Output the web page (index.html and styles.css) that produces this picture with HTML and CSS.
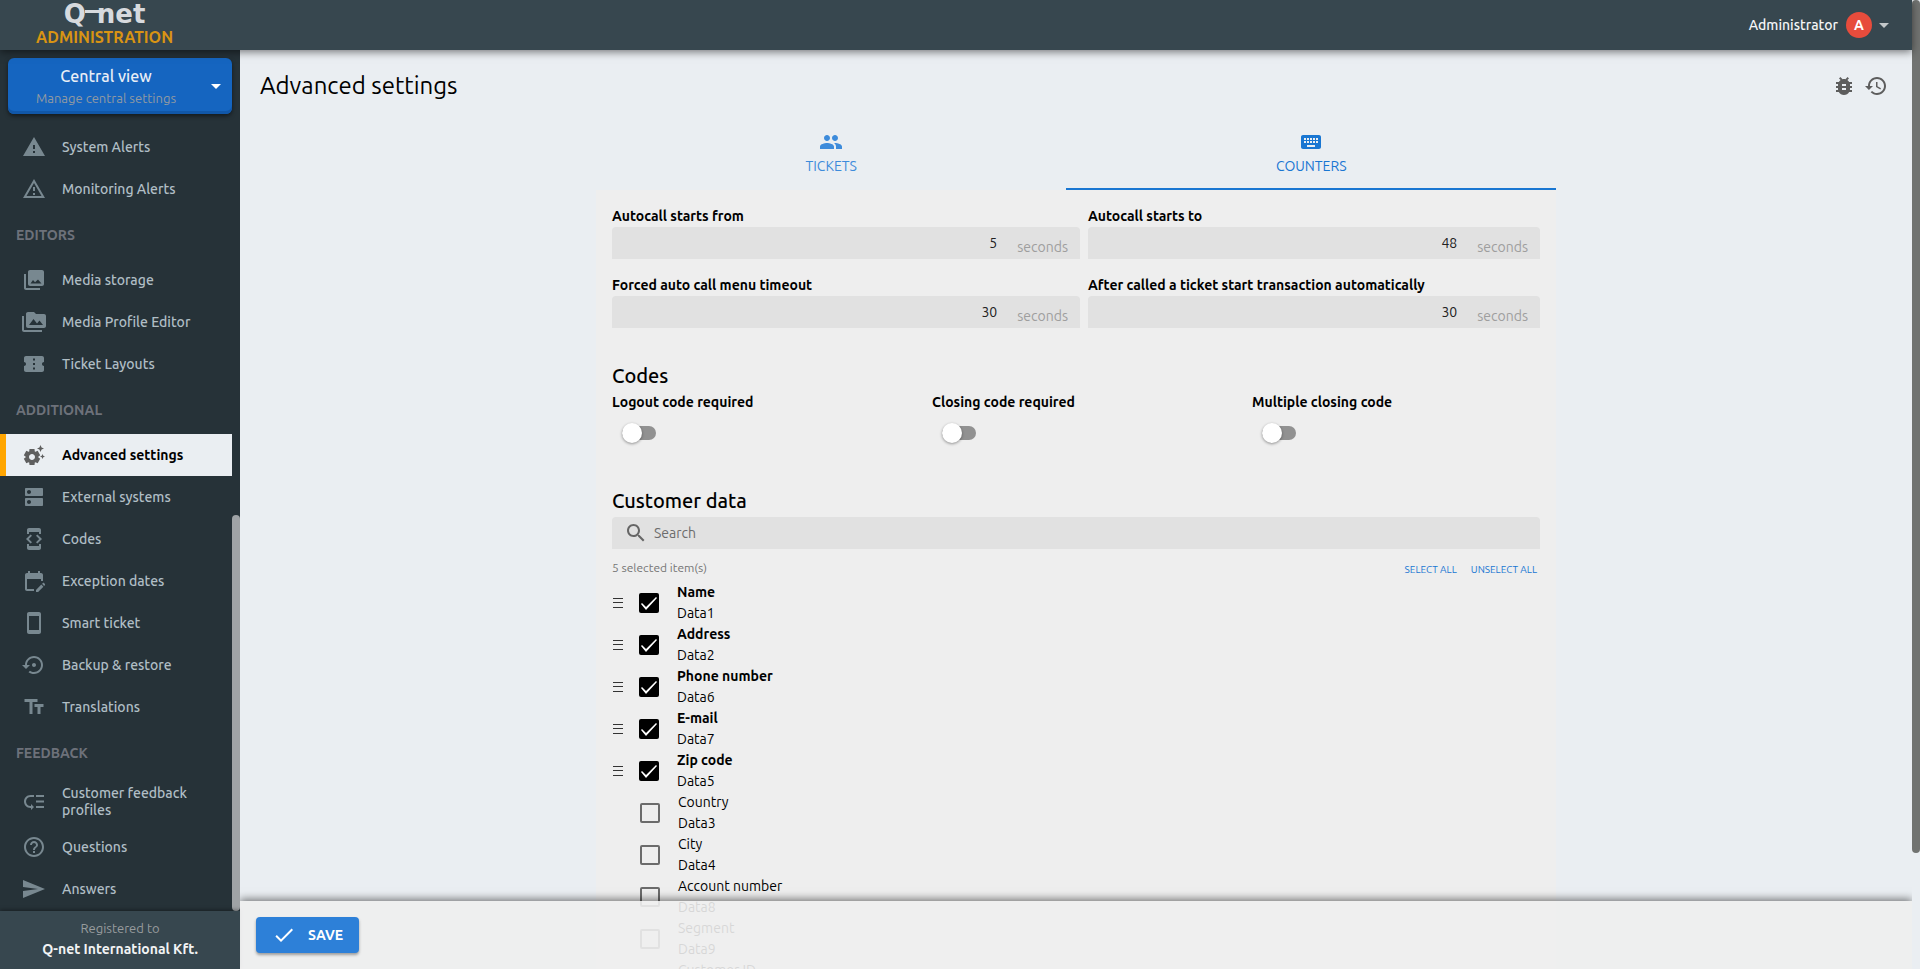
FILE: index.html
```html
<!DOCTYPE html>
<html lang="en">
<head>
<meta charset="utf-8">
<title>Advanced settings</title>
<link rel="stylesheet" href="styles.css">
</head>
<body>
<svg class="sprite" aria-hidden="true">
  <symbol id="i-warning" viewBox="0 0 24 24"><path d="M1 21h22L12 2 1 21zm12-3h-2v-2h2v2zm0-4h-2v-4h2v4z"/></symbol>
  <symbol id="i-warning-o" viewBox="0 0 24 24"><path d="M12 5.99L19.53 19H4.47L12 5.99M12 2L1 21h22L12 2zm1 14h-2v2h2v-2zm0-6h-2v4h2v-4z"/></symbol>
  <symbol id="i-photos" viewBox="0 0 24 24"><path d="M22 16V4c0-1.1-.9-2-2-2H8c-1.1 0-2 .9-2 2v12c0 1.1.9 2 2 2h12c1.1 0 2-.9 2-2zM8.500 15.500l2.500-3.500 2.030 2.200L16 11.500l3.500 4H8.500zM2 6v14c0 1.1.9 2 2 2h14v-2H4V6H2z"/></symbol>
  <symbol id="i-media" viewBox="0 0 24 24"><path d="M2 6H0v5h.01L0 20c0 1.1.9 2 2 2h18v-2H2V6zm20-2h-8l-2-2H6c-1.100 0-1.990.9-1.990 2L4 16c0 1.1.9 2 2 2h16c1.1 0 2-.9 2-2V6c0-1.100-.9-2-2-2zM7 15l4.500-6 3.500 4.510 2.500-3.010L21 15H7z"/></symbol>
  <symbol id="i-ticket" viewBox="0 0 24 24"><path d="M22 10V6c0-1.110-.9-2-2-2H4c-1.100 0-1.990.89-1.990 2v4c1.100 0 1.990.9 1.990 2s-.89 2-2 2v4c0 1.100.9 2 2 2h16c1.100 0 2-.9 2-2v-4c-1.100 0-2-.9-2-2s.9-2 2-2zm-9 7.500h-2v-2h2v2zm0-4.500h-2v-2h2v2zm0-4.500h-2v-2h2v2z"/></symbol>
  <symbol id="i-suggest" viewBox="0 0 24 24"><path d="M17.41 6.59L15 5.5l2.41-1.09L18.5 2l1.09 2.410L22 5.500l-2.410 1.090L18.500 9l-1.090-2.410zM21.280 12.720L20.500 11l-.78 1.720L18 13.500l1.720.78L20.500 16l.78-1.720L23 13.500l-1.720-.78zM16.240 14.370l1.940 1.470-2.500 4.330-2.240-.94c-.2.13-.42.26-.64.37l-.3 2.400h-5l-.3-2.410c-.22-.11-.43-.23-.64-.37l-2.240.94-2.500-4.330 1.940-1.470c-.01-.11-.01-.24-.01-.36s0-.25.01-.37l-1.940-1.470 2.500-4.330 2.240.94c.2-.13.42-.26.64-.37L7.500 6h5l.3 2.410c.22.11.43.23.64.37l2.240-.94 2.500 4.330-1.940 1.470c.01.12.01.24.01.37s0 .24-.01.36zM13 14c0-1.660-1.340-3-3-3s-3 1.340-3 3 1.340 3 3 3 3-1.340 3-3z"/></symbol>
  <symbol id="i-dns" viewBox="0 0 24 24"><path d="M20 13H4c-.55 0-1 .45-1 1v6c0 .55.45 1 1 1h16c.55 0 1-.45 1-1v-6c0-.55-.45-1-1-1zM7 19c-1.100 0-2-.9-2-2s.9-2 2-2 2 .9 2 2-.9 2-2 2zM20 3H4c-.55 0-1 .45-1 1v6c0 .55.45 1 1 1h16c.55 0 1-.45 1-1V4c0-.55-.45-1-1-1zM7 9c-1.100 0-2-.9-2-2s.9-2 2-2 2 .9 2 2-.9 2-2 2z"/></symbol>
  <symbol id="i-code" viewBox="0 0 24 24"><path d="M7 5h10v2h2V3c0-1.100-.9-1.990-2-1.990L7 1c-1.100 0-2 .9-2 2v4h2V5zm8.410 11.590L20 12l-4.590-4.590L14 8.830 17.170 12 14 15.170l1.410 1.420zM10 15.170L6.830 12 10 8.830 8.590 7.410 4 12l4.590 4.590L10 15.170zM17 19H7v-2H5v4c0 1.100.9 2 2 2h10c1.100 0 2-.9 2-2v-4h-2v2z"/></symbol>
  <symbol id="i-calendar" viewBox="0 0 24 24"><path d="M12 22H5c-1.110 0-2-.9-2-2l.01-14c0-1.100.88-2 1.990-2h1V2h2v2h8V2h2v2h1c1.100 0 2 .9 2 2v6h-2v-2H5v10h7v2zm10.130-5.010.71-.71c.39-.39.39-1.020 0-1.410l-.71-.71c-.39-.39-1.020-.39-1.410 0l-.71.71 2.120 2.120zm-.71.71-5.300 5.300H14v-2.120l5.300-5.300 2.120 2.120z"/></symbol>
  <symbol id="i-phone" viewBox="0 0 24 24"><path d="M17 1.010L7 1c-1.100 0-1.990.9-1.990 2v18c0 1.100.89 2 1.990 2h10c1.100 0 2-.9 2-2V3c0-1.100-.9-1.990-2-1.990zM17 19H7V5h10v14z"/></symbol>
  <symbol id="i-backup" viewBox="0 0 24 24"><path d="M14 12c0-1.100-.9-2-2-2s-2 .9-2 2 .9 2 2 2 2-.9 2-2zm-2-9c-4.970 0-9 4.030-9 9H0l4 4 4-4H5c0-3.870 3.130-7 7-7s7 3.130 7 7-3.130 7-7 7c-1.510 0-2.910-.49-4.060-1.300l-1.420 1.440C8.040 20.300 9.940 21 12 21c4.970 0 9-4.030 9-9s-4.030-9-9-9z"/></symbol>
  <symbol id="i-text" viewBox="0 0 24 24"><path d="M2.500 4v3h5v12h3V7h5V4h-13zm19 5h-9v3h3v7h3v-7h3V9z"/></symbol>
  <symbol id="i-priority" viewBox="0 0 24 24"><path d="M14 5h8v2h-8zm0 5.500h8v2h-8zm0 5.500h8v2h-8zM2 11.500C2 15.080 4.920 18 8.500 18H9v2l3-3-3-3v2h-.5C6.020 16 4 13.980 4 11.500S6.020 7 8.500 7H12V5H8.500C4.920 5 2 7.920 2 11.500z"/></symbol>
  <symbol id="i-help" viewBox="0 0 24 24"><path d="M11 18h2v-2h-2v2zm1-16C6.480 2 2 6.480 2 12s4.480 10 10 10 10-4.480 10-10S17.520 2 12 2zm0 18c-4.410 0-8-3.590-8-8s3.590-8 8-8 8 3.590 8 8-3.590 8-8 8zm0-14c-2.210 0-4 1.790-4 4h2c0-1.100.9-2 2-2s2 .9 2 2c0 2-3 1.750-3 5h2c0-2.250 3-2.500 3-5 0-2.210-1.790-4-4-4z"/></symbol>
  <symbol id="i-send" viewBox="0 0 24 24"><path d="M1 21L23 12 1 3v7l15 2-15 2z"/></symbol>
  <symbol id="i-bug" viewBox="0 0 24 24"><path d="M20 8h-2.810c-.45-.78-1.070-1.450-1.820-1.960L17 4.410 15.590 3l-2.170 2.170C12.960 5.060 12.490 5 12 5c-.49 0-.96.06-1.410.17L8.410 3 7 4.410l1.620 1.630C7.880 6.550 7.260 7.220 6.810 8H4v2h2.090c-.05.33-.09.66-.09 1v1H4v2h2v1c0 .34.04.67.09 1H4v2h2.810c1.040 1.790 2.970 3 5.190 3s4.150-1.210 5.190-3H20v-2h-2.090c.05-.33.09-.66.09-1v-1h2v-2h-2v-1c0-.34-.04-.67-.09-1H20V8zm-6 8h-4v-2h4v2zm0-4h-4v-2h4v2z"/></symbol>
  <symbol id="i-history" viewBox="0 0 24 24"><path d="M13 3c-4.970 0-9 4.030-9 9H1l3.890 3.890.07.14L9 12H6c0-3.870 3.130-7 7-7s7 3.130 7 7-3.130 7-7 7c-1.930 0-3.680-.79-4.940-2.060l-1.420 1.420C8.270 19.990 10.510 21 13 21c4.970 0 9-4.030 9-9s-4.030-9-9-9zm-1 5v5l4.280 2.540.72-1.210-3.500-2.080V8H12z"/></symbol>
  <symbol id="i-people" viewBox="0 0 24 24"><path d="M16 11c1.660 0 2.990-1.340 2.990-3S17.660 5 16 5c-1.660 0-3 1.340-3 3s1.340 3 3 3zm-8 0c1.660 0 2.990-1.340 2.990-3S9.660 5 8 5C6.340 5 5 6.340 5 8s1.340 3 3 3zm0 2c-2.330 0-7 1.170-7 3.500V19h14v-2.500c0-2.330-4.670-3.500-7-3.500zm8 0c-.29 0-.62.02-.97.05 1.160.84 1.970 1.970 1.970 3.450V19h6v-2.500c0-2.330-4.670-3.500-7-3.500z"/></symbol>
  <symbol id="i-keyboard" viewBox="0 0 24 24"><path d="M20 5H4c-1.100 0-1.990.9-1.990 2L2 17c0 1.100.9 2 2 2h16c1.100 0 2-.9 2-2V7c0-1.100-.9-2-2-2zm-9 3h2v2h-2V8zm0 3h2v2h-2v-2zM8 8h2v2H8V8zm0 3h2v2H8v-2zm-1 2H5v-2h2v2zm0-3H5V8h2v2zm9 7H8v-2h8v2zm0-4h-2v-2h2v2zm0-3h-2V8h2v2zm3 3h-2v-2h2v2zm0-3h-2V8h2v2z"/></symbol>
  <symbol id="i-check" viewBox="0 0 24 24"><path d="M9 16.170L4.830 12l-1.420 1.410L9 19 21 7l-1.410-1.410z"/></symbol>
  <symbol id="i-drop" viewBox="0 0 24 24"><path d="M7 10l5 5 5-5z"/></symbol>
  <symbol id="i-search" viewBox="0 0 24 24"><path d="M15.500 14h-.79l-.28-.27C15.410 12.590 16 11.110 16 9.500 16 5.910 13.090 3 9.500 3S3 5.910 3 9.500 5.910 16 9.500 16c1.610 0 3.090-.59 4.230-1.570l.27.28v.79l5 4.990L20.490 19l-4.990-5zm-6 0C7.010 14 5 11.990 5 9.500S7.010 5 9.500 5 14 7.010 14 9.500 11.990 14 9.500 14z"/></symbol>
  <symbol id="i-handle" viewBox="0 0 12 12"><path d="M1 1h10v1H1zM1 5h10v1H1zM1 10h10v1H1z"/></symbol>
</svg>
<div class="app">
  <div class="shell">
    <header class="topbar">
      <div class="brand">
        <div class="logo" aria-label="Q-net"><span>Q</span><span class="logo-bar"></span><span>net</span></div>
        <div class="brand-sub">ADMINISTRATION</div>
      </div>
      <button class="user" type="button">
        <span>Administrator</span>
        <span class="avatar">A</span>
        <svg class="icon user-arrow"><use href="#i-drop"/></svg>
      </button>
    </header>
    <div class="body">
      <aside class="sidebar">
        <button class="switcher" type="button">
          <span class="switcher-text"><span class="switcher-title">Central view</span><span class="switcher-sub">Manage central settings</span></span>
          <svg class="icon"><use href="#i-drop"/></svg>
        </button>
        <div class="nav-wrap">
          <nav class="nav">
            <a class="nav-item" href="#"><svg class="icon"><use href="#i-warning"/></svg><span>System Alerts</span></a>
            <a class="nav-item" href="#"><svg class="icon"><use href="#i-warning-o"/></svg><span>Monitoring Alerts</span></a>
            <h2 class="nav-head">EDITORS</h2>
            <a class="nav-item" href="#"><svg class="icon"><use href="#i-photos"/></svg><span>Media storage</span></a>
            <a class="nav-item" href="#"><svg class="icon"><use href="#i-media"/></svg><span>Media Profile Editor</span></a>
            <a class="nav-item" href="#"><svg class="icon"><use href="#i-ticket"/></svg><span>Ticket Layouts</span></a>
            <h2 class="nav-head">ADDITIONAL</h2>
            <a class="nav-item active" href="#"><svg class="icon"><use href="#i-suggest"/></svg><span>Advanced settings</span></a>
            <a class="nav-item" href="#"><svg class="icon"><use href="#i-dns"/></svg><span>External systems</span></a>
            <a class="nav-item" href="#"><svg class="icon"><use href="#i-code"/></svg><span>Codes</span></a>
            <a class="nav-item" href="#"><svg class="icon"><use href="#i-calendar"/></svg><span>Exception dates</span></a>
            <a class="nav-item" href="#"><svg class="icon"><use href="#i-phone"/></svg><span>Smart ticket</span></a>
            <a class="nav-item" href="#"><svg class="icon"><use href="#i-backup"/></svg><span>Backup &amp; restore</span></a>
            <a class="nav-item" href="#"><svg class="icon"><use href="#i-text"/></svg><span>Translations</span></a>
            <h2 class="nav-head">FEEDBACK</h2>
            <a class="nav-item tall" href="#"><svg class="icon"><use href="#i-priority"/></svg><span>Customer feedback profiles</span></a>
            <a class="nav-item" href="#"><svg class="icon"><use href="#i-help"/></svg><span>Questions</span></a>
            <a class="nav-item" href="#"><svg class="icon"><use href="#i-send"/></svg><span>Answers</span></a>
          </nav>
          <div class="nav-scroll"><div class="nav-thumb"></div></div>
        </div>
        <footer class="registered"><span class="reg-label">Registered to</span><span class="reg-name">Q-net International Kft.</span></footer>
      </aside>
      <main class="main">
        <div class="content">
          <div class="title-row">
            <h1>Advanced settings</h1>
            <div class="actions">
              <button type="button" aria-label="Report a bug"><svg class="icon"><use href="#i-bug"/></svg></button>
              <button type="button" aria-label="History"><svg class="icon"><use href="#i-history"/></svg></button>
            </div>
          </div>
          <div class="column">
            <div class="tabs" role="tablist">
              <button class="tab" role="tab" type="button"><svg class="icon"><use href="#i-people"/></svg><span>TICKETS</span></button>
              <button class="tab selected" role="tab" aria-selected="true" type="button"><svg class="icon"><use href="#i-keyboard"/></svg><span>COUNTERS</span></button>
            </div>
            <section class="panel">
              <div class="fields">
                <div><label for="f1">Autocall starts from</label><div class="field"><input id="f1" type="text" value="5"><span>seconds</span></div></div>
                <div><label for="f2">Autocall starts to</label><div class="field"><input id="f2" type="text" value="48"><span>seconds</span></div></div>
                <div><label for="f3">Forced auto call menu timeout</label><div class="field"><input id="f3" type="text" value="30"><span>seconds</span></div></div>
                <div><label for="f4">After called a ticket start transaction automatically</label><div class="field"><input id="f4" type="text" value="30"><span>seconds</span></div></div>
              </div>
              <h3>Codes</h3>
              <div class="codes">
                <div><label for="c1">Logout code required</label><div class="toggle-row"><input id="c1" class="toggle" type="checkbox"></div></div>
                <div><label for="c2">Closing code required</label><div class="toggle-row"><input id="c2" class="toggle" type="checkbox"></div></div>
                <div><label for="c3">Multiple closing code</label><div class="toggle-row"><input id="c3" class="toggle" type="checkbox"></div></div>
              </div>
              <h3>Customer data</h3>
              <div class="search"><svg class="icon"><use href="#i-search"/></svg><input type="text" placeholder="Search" aria-label="Search"></div>
              <div class="summary">
                <span>5 selected item(s)</span>
                <div class="bulk"><button type="button">SELECT ALL</button><button type="button">UNSELECT ALL</button></div>
              </div>
              <ul class="items">
                <li class="on"><svg class="handle"><use href="#i-handle"/></svg><input id="d1" type="checkbox" checked><label for="d1"><b>Name</b><span>Data1</span></label></li>
                <li class="on"><svg class="handle"><use href="#i-handle"/></svg><input id="d2" type="checkbox" checked><label for="d2"><b>Address</b><span>Data2</span></label></li>
                <li class="on"><svg class="handle"><use href="#i-handle"/></svg><input id="d6" type="checkbox" checked><label for="d6"><b>Phone number</b><span>Data6</span></label></li>
                <li class="on"><svg class="handle"><use href="#i-handle"/></svg><input id="d7" type="checkbox" checked><label for="d7"><b>E-mail</b><span>Data7</span></label></li>
                <li class="on"><svg class="handle"><use href="#i-handle"/></svg><input id="d5" type="checkbox" checked><label for="d5"><b>Zip code</b><span>Data5</span></label></li>
                <li><input id="d3" type="checkbox"><label for="d3"><span>Country</span><span>Data3</span></label></li>
                <li><input id="d4" type="checkbox"><label for="d4"><span>City</span><span>Data4</span></label></li>
                <li><input id="d8" type="checkbox"><label for="d8"><span>Account number</span><span>Data8</span></label></li>
                <li><input id="d9" type="checkbox"><label for="d9"><span>Segment</span><span>Data9</span></label></li>
                <li><input id="d10" type="checkbox"><label for="d10"><span>Customer ID</span><span>Data10</span></label></li>
              </ul>
            </section>
          </div>
        </div>
        <div class="savebar"><button class="save" type="button"><svg class="icon"><use href="#i-check"/></svg><span>SAVE</span></button></div>
      </main>
    </div>
  </div>
  <div class="page-scroll"><div class="page-thumb"></div></div>
</div>
</body>
</html>
```
FILE: styles.css
```css
* { box-sizing: border-box; }
body {
  margin: 0;
  font-family: Ubuntu, "Noto Sans", sans-serif;
  font-size: 14px;
  line-height: 21px;
  color: #000;
  background: #eaeef2;
}
button, input { font: inherit; }
button { border: 0; padding: 0; background: none; color: inherit; cursor: pointer; }
h1, h2, h3, ul { margin: 0; padding: 0; }
.sprite { display: none; }
.icon { width: 24px; height: 24px; flex: none; fill: currentColor; display: block; }

.app { display: flex; height: 100vh; overflow: hidden; }
.shell { flex: 1; min-width: 0; display: flex; flex-direction: column; }
.page-scroll { width: 8px; background: #eaeef2; }
.page-thumb { height: 88%; border-radius: 4px; background: #717371; }

.topbar {
  position: relative;
  z-index: 3;
  height: 50px;
  display: flex;
  justify-content: space-between;
  background: #37474f;
  box-shadow: 0 2px 8px rgba(0, 0, 0, .5);
}
.brand { padding-left: 36px; display: flex; flex-direction: column; align-items: center; }
.logo {
  display: flex;
  height: 26px;
  font: bold 26px/28px "DejaVu Sans", sans-serif;
  color: #d7dade;
}
.logo-bar { width: 18px; height: 3px; margin: 10px -6px 0 -1px; background: currentColor; }
.brand-sub { font-size: 16px; font-weight: 700; color: #d99413; line-height: 22px; }
.user { display: flex; align-items: center; color: #f5f6f7; font-weight: 500; padding: 0 16px 0 0; }
.avatar {
  width: 26px; height: 26px; margin: 0 0 0 8px;
  border-radius: 50%;
  background: #e74c3c;
  color: #fff;
  font-weight: 700;
  line-height: 26px;
}
.user-arrow { color: #c3c8ca; }

.body { flex: 1; min-height: 0; display: flex; }
.sidebar { width: 240px; flex: none; display: flex; flex-direction: column; background: #263238; }
.switcher {
  margin: 8px 8px 12px;
  height: 56px;
  flex: none;
  display: flex;
  align-items: center;
  padding-right: 4px;
  border-radius: 6px;
  background: #1565c0;
  box-shadow: inset 0 -3px #1157a8, 0 2px 4px rgba(0, 0, 0, .5);
}
.switcher-text { flex: 1; display: flex; flex-direction: column; }
.switcher-title { font-size: 16px; line-height: 24px; font-weight: 500; color: #e8eef6; }
.switcher-sub { font-size: 13px; color: #929aa2; }
.switcher .icon { color: #fff; }
.nav-wrap { flex: 1; min-height: 0; display: flex; overflow: hidden; }
.nav { flex: 1; }
.nav-scroll { width: 8px; display: flex; align-items: flex-end; }
.nav-thumb { width: 8px; height: 50.500%; border-radius: 4px; background: #9fa3a6; }
.nav-item {
  height: 42px;
  display: flex;
  align-items: center;
  gap: 16px;
  padding: 0 16px;
  border-left: 6px solid transparent;
  color: #b0bec5;
  font-weight: 500;
  line-height: 17px;
  text-decoration: none;
}
.nav-item .icon { color: #788890; }
.nav-item.tall { height: 49px; }
.nav-item.active { background: #eaeef2; border-left-color: #ffa500; color: #000; font-weight: 600; }
.nav-item.active .icon { color: #5f5f5f; }
.nav-head { height: 49px; padding-left: 16px; font-size: 14px; line-height: 50px; color: #6d717a; font-weight: 700; }
.registered {
  position: relative;
  height: 58px;
  flex: none;
  display: flex;
  flex-direction: column;
  align-items: center;
  padding-top: 7px;
  background: #37474f;
  box-shadow: 0 -1px 4px rgba(0, 0, 0, .4);
}
.reg-label { font-size: 13px; color: #979c9e; }
.reg-name { font-weight: 600; color: #f2f3f4; }

.main { flex: 1; min-width: 0; position: relative; overflow: hidden; }
.content { height: 100%; overflow: hidden; padding-top: 20px; }
.title-row { display: flex; justify-content: space-between; padding: 0 24px 0 20px; margin-bottom: 16px; height: 32px; }
h1 { font-size: 24px; line-height: 32px; font-weight: 400; }
.actions { display: flex; align-items: center; gap: 8px; color: #5d5d5d; }
.column { max-width: 960px; margin: 0 auto; }
.tabs { display: flex; height: 72px; }
.tab {
  flex: 1 1 auto;
  display: flex;
  flex-direction: column;
  align-items: center;
  padding-top: 12px;
  gap: 2px;
  color: #3d8bdb;
  border-bottom: 2px solid transparent;
}
.tab.selected { color: #1976d2; border-bottom-color: #1976d2; }
.panel { padding: 16px 16px 0; background: #eee; }
.panel label { display: block; }
.fields label, .codes label { font-weight: 600; }
.fields { display: grid; grid-template-columns: 468fr 452fr; gap: 16px 8px; }
.field {
  display: flex;
  height: 32px;
  padding-right: 12px;
  border-radius: 4px 4px 0 0;
  background: #e1e1e1;
}
.field input {
  flex: 1;
  min-width: 0;
  border: 0;
  padding: 0 20px 0 12px;
  background: none;
  color: #222;
  text-align: right;
}
.field span { color: #9e9e9e; line-height: 41px; }
h3 { margin-top: 34px; padding-bottom: 2px; font-size: 20px; line-height: 28px; font-weight: 500; }
.codes { display: grid; grid-template-columns: repeat(3, 1fr); margin-right: -32px; }
.toggle-row { height: 40px; display: flex; align-items: center; padding-left: 10px; }
.toggle {
  appearance: none;
  margin: 0;
  width: 34px; height: 14px;
  border-radius: 7px;
  background: #919191;
  display: flex;
  align-items: center;
}
.toggle::before {
  content: "";
  width: 20px; height: 20px;
  flex: none;
  border-radius: 50%;
  background: #fff;
  box-shadow: 0 1px 3px rgba(0, 0, 0, .4);
}
.search { display: flex; align-items: center; gap: 6px; height: 32px; padding: 0 12px; border-radius: 4px 4px 0 0; background: #e1e1e1; }
.search .icon { color: #666; }
.search input { flex: 1; border: 0; padding: 0; background: none; }
.search input::placeholder { color: #6c6c6c; opacity: 1; }
.summary { display: flex; justify-content: space-between; align-items: center; height: 33px; padding: 3px 3px 0 0; font-size: 12px; color: #757575; }
.bulk { display: flex; gap: 14px; padding-top: 4px; font-size: 10px; color: #1976d2; }
.items { list-style: none; }
.items li { height: 42px; display: flex; align-items: center; padding-left: 28px; }
.items li.on { padding-left: 0; }
.handle { width: 12px; height: 12px; margin-right: 15px; fill: #333; }
.items label { line-height: 21px; padding-left: 18px; }
.items b, .items label span { display: block; }
.items b { font-weight: 600; }
.items input {
  appearance: none;
  margin: 0;
  width: 20px; height: 20px;
  border: 2px solid #6b6b6b;
  border-radius: 2px;
}
.items input:checked { border: 0; background: #000; }
.items input:checked::before {
  content: "";
  display: block;
  width: 20px; height: 20px;
  background: #fff;
  clip-path: polygon(2px 11px, 3px 10px, 7px 14px, 17px 4px, 18px 5px, 7px 17px);
}
.savebar {
  position: absolute;
  left: 0; right: 0; bottom: 0;
  height: 68px;
  padding: 16px;
  background: rgba(238, 238, 238, .9);
  box-shadow: 0 -2px 8px rgba(0, 0, 0, .5);
}
.save {
  display: flex;
  align-items: center;
  gap: 12px;
  height: 36px;
  padding: 0 16px;
  border-radius: 4px;
  background: #2d80d8;
  color: #fff;
  font-weight: 600;
  box-shadow: 0 2px 3px rgba(0, 0, 0, .35);
}
```
